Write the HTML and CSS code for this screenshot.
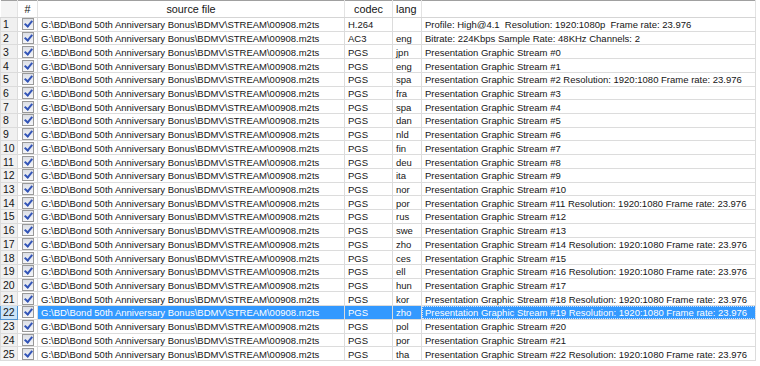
FILE: index.html
```html
<!DOCTYPE html>
<html lang="en">
<head>
    <title>Stream list</title>
    <link rel="stylesheet" href="styles.css">
</head>
<body>
<table class="grid">
    <colgroup>
        <col class="c_num"><col class="c_chk"><col class="c_src"><col class="c_codec"><col class="c_lang"><col class="c_desc">
    </colgroup>
    <thead>
        <tr>
            <th class="corner"></th><th>#</th><th>source file</th><th>codec</th><th class="left">lang</th><th></th>
        </tr>
    </thead>
    <tbody>
        <tr><td class="num">1</td><td class="chk"><span class="box"></span></td><td>G:\BD\Bond 50th Anniversary Bonus\BDMV\STREAM\00908.m2ts</td><td>H.264</td><td></td><td>Profile: High@4.1&nbsp; Resolution: 1920:1080p&nbsp; Frame rate: 23.976</td></tr>
        <tr><td class="num">2</td><td class="chk"><span class="box"></span></td><td>G:\BD\Bond 50th Anniversary Bonus\BDMV\STREAM\00908.m2ts</td><td>AC3</td><td>eng</td><td>Bitrate: 224Kbps Sample Rate: 48KHz Channels: 2</td></tr>
        <tr><td class="num">3</td><td class="chk"><span class="box"></span></td><td>G:\BD\Bond 50th Anniversary Bonus\BDMV\STREAM\00908.m2ts</td><td>PGS</td><td>jpn</td><td>Presentation Graphic Stream #0</td></tr>
        <tr><td class="num">4</td><td class="chk"><span class="box"></span></td><td>G:\BD\Bond 50th Anniversary Bonus\BDMV\STREAM\00908.m2ts</td><td>PGS</td><td>eng</td><td>Presentation Graphic Stream #1</td></tr>
        <tr><td class="num">5</td><td class="chk"><span class="box"></span></td><td>G:\BD\Bond 50th Anniversary Bonus\BDMV\STREAM\00908.m2ts</td><td>PGS</td><td>spa</td><td>Presentation Graphic Stream #2 Resolution: 1920:1080 Frame rate: 23.976</td></tr>
        <tr><td class="num">6</td><td class="chk"><span class="box"></span></td><td>G:\BD\Bond 50th Anniversary Bonus\BDMV\STREAM\00908.m2ts</td><td>PGS</td><td>fra</td><td>Presentation Graphic Stream #3</td></tr>
        <tr><td class="num">7</td><td class="chk"><span class="box"></span></td><td>G:\BD\Bond 50th Anniversary Bonus\BDMV\STREAM\00908.m2ts</td><td>PGS</td><td>spa</td><td>Presentation Graphic Stream #4</td></tr>
        <tr><td class="num">8</td><td class="chk"><span class="box"></span></td><td>G:\BD\Bond 50th Anniversary Bonus\BDMV\STREAM\00908.m2ts</td><td>PGS</td><td>dan</td><td>Presentation Graphic Stream #5</td></tr>
        <tr><td class="num">9</td><td class="chk"><span class="box"></span></td><td>G:\BD\Bond 50th Anniversary Bonus\BDMV\STREAM\00908.m2ts</td><td>PGS</td><td>nld</td><td>Presentation Graphic Stream #6</td></tr>
        <tr><td class="num">10</td><td class="chk"><span class="box"></span></td><td>G:\BD\Bond 50th Anniversary Bonus\BDMV\STREAM\00908.m2ts</td><td>PGS</td><td>fin</td><td>Presentation Graphic Stream #7</td></tr>
        <tr><td class="num">11</td><td class="chk"><span class="box"></span></td><td>G:\BD\Bond 50th Anniversary Bonus\BDMV\STREAM\00908.m2ts</td><td>PGS</td><td>deu</td><td>Presentation Graphic Stream #8</td></tr>
        <tr><td class="num">12</td><td class="chk"><span class="box"></span></td><td>G:\BD\Bond 50th Anniversary Bonus\BDMV\STREAM\00908.m2ts</td><td>PGS</td><td>ita</td><td>Presentation Graphic Stream #9</td></tr>
        <tr><td class="num">13</td><td class="chk"><span class="box"></span></td><td>G:\BD\Bond 50th Anniversary Bonus\BDMV\STREAM\00908.m2ts</td><td>PGS</td><td>nor</td><td>Presentation Graphic Stream #10</td></tr>
        <tr><td class="num">14</td><td class="chk"><span class="box"></span></td><td>G:\BD\Bond 50th Anniversary Bonus\BDMV\STREAM\00908.m2ts</td><td>PGS</td><td>por</td><td>Presentation Graphic Stream #11 Resolution: 1920:1080 Frame rate: 23.976</td></tr>
        <tr><td class="num">15</td><td class="chk"><span class="box"></span></td><td>G:\BD\Bond 50th Anniversary Bonus\BDMV\STREAM\00908.m2ts</td><td>PGS</td><td>rus</td><td>Presentation Graphic Stream #12</td></tr>
        <tr><td class="num">16</td><td class="chk"><span class="box"></span></td><td>G:\BD\Bond 50th Anniversary Bonus\BDMV\STREAM\00908.m2ts</td><td>PGS</td><td>swe</td><td>Presentation Graphic Stream #13</td></tr>
        <tr><td class="num">17</td><td class="chk"><span class="box"></span></td><td>G:\BD\Bond 50th Anniversary Bonus\BDMV\STREAM\00908.m2ts</td><td>PGS</td><td>zho</td><td>Presentation Graphic Stream #14 Resolution: 1920:1080 Frame rate: 23.976</td></tr>
        <tr><td class="num">18</td><td class="chk"><span class="box"></span></td><td>G:\BD\Bond 50th Anniversary Bonus\BDMV\STREAM\00908.m2ts</td><td>PGS</td><td>ces</td><td>Presentation Graphic Stream #15</td></tr>
        <tr><td class="num">19</td><td class="chk"><span class="box"></span></td><td>G:\BD\Bond 50th Anniversary Bonus\BDMV\STREAM\00908.m2ts</td><td>PGS</td><td>ell</td><td>Presentation Graphic Stream #16 Resolution: 1920:1080 Frame rate: 23.976</td></tr>
        <tr><td class="num">20</td><td class="chk"><span class="box"></span></td><td>G:\BD\Bond 50th Anniversary Bonus\BDMV\STREAM\00908.m2ts</td><td>PGS</td><td>hun</td><td>Presentation Graphic Stream #17</td></tr>
        <tr><td class="num">21</td><td class="chk"><span class="box"></span></td><td>G:\BD\Bond 50th Anniversary Bonus\BDMV\STREAM\00908.m2ts</td><td>PGS</td><td>kor</td><td>Presentation Graphic Stream #18 Resolution: 1920:1080 Frame rate: 23.976</td></tr>
        <tr class="selected"><td class="num">22</td><td class="chk"><span class="box"></span></td><td>G:\BD\Bond 50th Anniversary Bonus\BDMV\STREAM\00908.m2ts</td><td>PGS</td><td>zho</td><td class="focus">Presentation Graphic Stream #19 Resolution: 1920:1080 Frame rate: 23.976</td></tr>
        <tr><td class="num">23</td><td class="chk"><span class="box"></span></td><td>G:\BD\Bond 50th Anniversary Bonus\BDMV\STREAM\00908.m2ts</td><td>PGS</td><td>pol</td><td>Presentation Graphic Stream #20</td></tr>
        <tr><td class="num">24</td><td class="chk"><span class="box"></span></td><td>G:\BD\Bond 50th Anniversary Bonus\BDMV\STREAM\00908.m2ts</td><td>PGS</td><td>por</td><td>Presentation Graphic Stream #21</td></tr>
        <tr><td class="num">25</td><td class="chk"><span class="box"></span></td><td>G:\BD\Bond 50th Anniversary Bonus\BDMV\STREAM\00908.m2ts</td><td>PGS</td><td>tha</td><td>Presentation Graphic Stream #22 Resolution: 1920:1080 Frame rate: 23.976</td></tr>
    </tbody>
</table>
</body>
</html>
```
FILE: styles.css
```css
body{
    margin:0;
    background-color:white;
    font-family:"Liberation Sans", Arial, sans-serif;
    font-size:9.5px;
    color:#151515;
}

.grid{
    width:756px;
    table-layout:fixed;
    border-collapse:collapse;
    border-top:1px solid #a0a0a0;
}

.c_num{ width:17px; }
.c_chk{ width:20px; }
.c_src{ width:307px; }
.c_codec{ width:48px; }
.c_lang{ width:29px; }

thead tr{
    height:17px;
}
th{
    padding:0;
    line-height:14px;
    font-size:10.8px;
    font-weight:normal;
    color:#151515;
    background-color:#ffffff;
    border-right:1px solid #e3e3e3;
    border-bottom:1px solid #d5d5d5;
    text-align:center;
    white-space:nowrap;
    overflow:hidden;
}
th.left{
    text-align:left;
    padding-left:3px;
}
th.corner{
    background-color:#f4f4f4;
}

tbody tr{
    height:13.72px;
}
td{
    padding:1px 0 0 3px;
    line-height:11px;
    border:1px solid #dcdcdc;
    white-space:nowrap;
    overflow:hidden;
}

td.num{
    background-color:#f0f0f0;
    padding-left:2px;
    font-size:10.5px;
}

td.chk{
    padding:0;
    text-align:center;
    line-height:0;
}

.box{
    display:inline-block;
    position:relative;
    width:10px;
    height:10px;
    border:1px solid #999999;
    background:linear-gradient(#dcdfe6, #f4f5f8);
}
.box::after{
    content:"";
    position:absolute;
    left:3px;
    top:0px;
    width:3px;
    height:6px;
    border-right:2px solid #3355b8;
    border-bottom:2px solid #3355b8;
    transform:rotate(40deg);
}

.selected td{
    background-color:#3399ff;
    color:white;
}
.selected td.num{
    background-color:#cce4f7;
    color:#151515;
    border:1px solid #4f94d4;
}
.selected td.chk{
    background-color:white;
}
.selected td.focus{
    outline:1px dotted #cfe4ff;
    outline-offset:-1px;
}
```
